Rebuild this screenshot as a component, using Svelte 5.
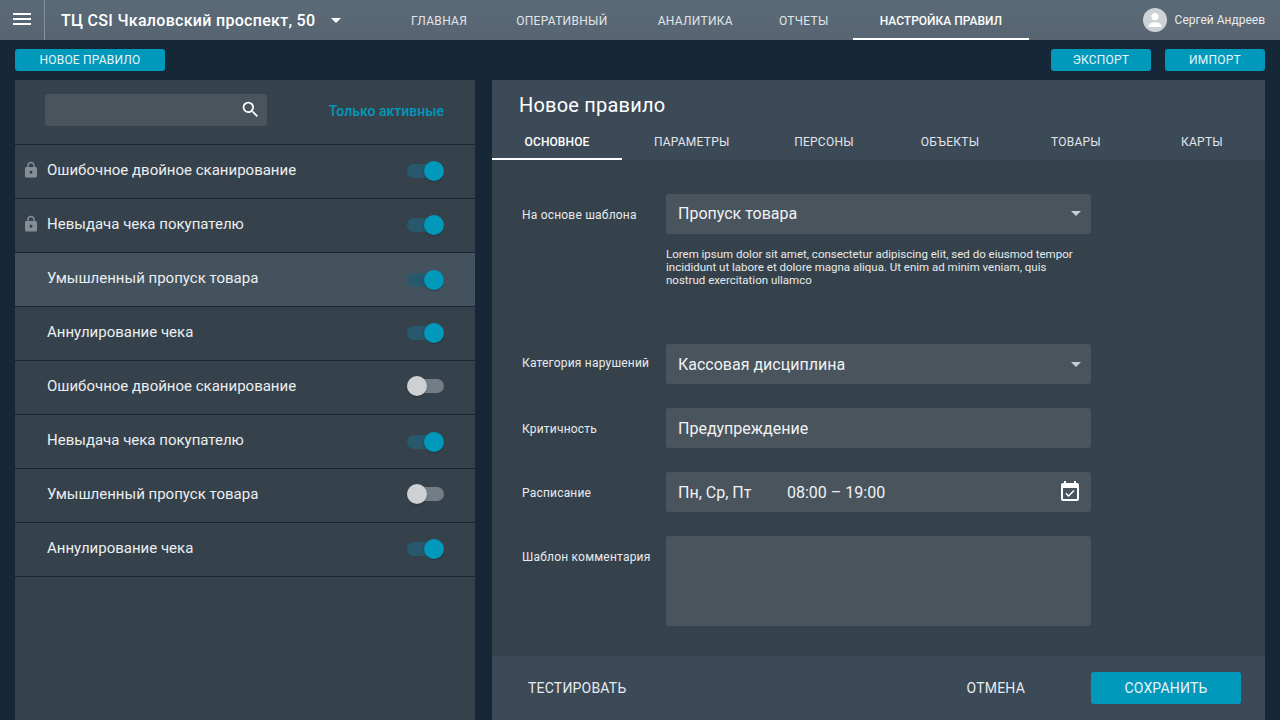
<script>
  const nav = ['ГЛАВНАЯ', 'ОПЕРАТИВНЫЙ', 'АНАЛИТИКА', 'ОТЧЕТЫ', 'НАСТРОЙКА ПРАВИЛ'];
  const tabs = ['ОСНОВНОЕ', 'ПАРАМЕТРЫ', 'ПЕРСОНЫ', 'ОБЪЕКТЫ', 'ТОВАРЫ', 'КАРТЫ'];
  const rules = [
    { name: 'Ошибочное двойное сканирование', locked: true, on: true },
    { name: 'Невыдача чека покупателю', locked: true, on: true },
    { name: 'Умышленный пропуск товара', on: true, selected: true, low: true },
    { name: 'Аннулирование чека', on: true },
    { name: 'Ошибочное двойное сканирование', on: false },
    { name: 'Невыдача чека покупателю', on: true, low: true },
    { name: 'Умышленный пропуск товара', on: false },
    { name: 'Аннулирование чека', on: true }
  ];
</script>

<div class="page">
  <header class="top">
    <button class="burger" aria-label="Меню"><span></span><span></span><span></span></button>
    <div class="place">
      <span class="place-name">ТЦ CSI Чкаловский проспект, 50</span>
      <i class="caret small"></i>
    </div>
    <nav class="nav">
      {#each nav as item, i}
        <span class="nav-item" class:active={i === nav.length - 1}>{item}</span>
      {/each}
    </nav>
    <div class="user">
      <svg class="avatar" viewBox="0 0 24 24" width="24" height="24">
        <circle cx="12" cy="12" r="12" fill="#ced2d6" />
        <circle cx="12" cy="8.6" r="3.6" fill="#fff" />
        <path d="M5.5 18.2c0-2.6 4-3.9 6.5-3.9s6.500 1.300 6.500 3.900v.8h-13z" fill="#fff" />
      </svg>
      <span>Сергей Андреев</span>
    </div>
  </header>

  <div class="toolbar">
    <button class="btn new">НОВОЕ ПРАВИЛО</button>
    <div class="toolbar-right">
      <button class="btn small-btn">ЭКСПОРТ</button>
      <button class="btn small-btn">ИМПОРТ</button>
    </div>
  </div>

  <main class="main">
    <aside class="left">
      <div class="filter">
        <div class="search">
          <svg viewBox="0 0 24 24" width="21" height="21"><path fill="#fff" d="M15.500 14h-.79l-.28-.27A6.470 6.470 0 0 0 16 9.500 6.500 6.500 0 1 0 9.500 16c1.610 0 3.090-.59 4.230-1.570l.27.28v.79l5 4.990L20.490 19l-4.990-5zm-6 0C7.010 14 5 11.990 5 9.500S7.010 5 9.500 5 14 7.010 14 9.500 11.990 14 9.500 14z"/></svg>
        </div>
        <span class="only">Только активные</span>
      </div>
      {#each rules as r}
        <div class="rule" class:selected={r.selected}>
          {#if r.locked}
            <svg class="lock" viewBox="0 0 24 24" width="18" height="18"><path fill="#858d95" d="M18 8h-1V6c0-2.760-2.240-5-5-5S7 3.240 7 6v2H6c-1.100 0-2 .9-2 2v10c0 1.100.9 2 2 2h12c1.100 0 2-.9 2-2V10c0-1.100-.9-2-2-2zm-6 9c-1.100 0-2-.9-2-2s.9-2 2-2 2 .9 2 2-.9 2-2 2zm3.100-9H8.900V6c0-1.710 1.390-3.100 3.100-3.100 1.710 0 3.100 1.390 3.100 3.100v2z"/></svg>
          {/if}
          <span class="rule-name">{r.name}</span>
          <span class="toggle" class:on={r.on} class:low={r.low}><span class="thumb"></span></span>
        </div>
      {/each}
    </aside>

    <section class="right">
      <div class="right-head">
        <h1>Новое правило</h1>
        <div class="tabs">
          {#each tabs as t, i}
            <span class="tab" class:active={i === 0}>{t}</span>
          {/each}
        </div>
      </div>

      <div class="form">
        <div class="row tmpl">
          <label>На основе шаблона</label>
          <div class="control">
            <div class="field"><span>Пропуск товара</span><i class="caret"></i></div>
            <p class="hint">Lorem ipsum dolor sit amet, consectetur adipiscing elit, sed do eiusmod tempor incididunt ut labore et dolore magna aliqua. Ut enim ad minim veniam, quis nostrud exercitation ullamco</p>
          </div>
        </div>
        <div class="row">
          <label class="up">Категория нарушений</label>
          <div class="field"><span>Кассовая дисциплина</span><i class="caret"></i></div>
        </div>
        <div class="row">
          <label class="low">Критичность</label>
          <div class="field"><span>Предупреждение</span></div>
        </div>
        <div class="row">
          <label class="low">Расписание</label>
          <div class="field">
            <span class="days">Пн, Ср, Пт</span>
            <span class="time">08:00 – 19:00</span>
            <svg class="cal" viewBox="0 0 24 24" width="24" height="24"><path fill="#fff" d="M16.530 11.060L15.470 10l-4.880 4.880-2.120-2.120-1.060 1.060L10.590 17l5.940-5.940zM19 3h-1V1h-2v2H8V1H6v2H5c-1.110 0-1.990.9-1.990 2L3 19c0 1.100.89 2 2 2h14c1.100 0 2-.9 2-2V5c0-1.100-.9-2-2-2zm0 16H5V8h14v11z"/></svg>
          </div>
        </div>
        <div class="row top-row">
          <label>Шаблон комментария</label>
          <div class="field area"></div>
        </div>
      </div>

      <footer class="foot">
        <button class="ghost test">ТЕСТИРОВАТЬ</button>
        <button class="ghost cancel">ОТМЕНА</button>
        <button class="btn save">СОХРАНИТЬ</button>
      </footer>
    </section>
  </main>
</div>

<style>
  :global(body) {
    margin: 0;
    background: #162737;
  }
  .page {
    width: 1280px;
    height: 720px;
    overflow: hidden;
    display: flex;
    flex-direction: column;
    background: #162737;
    font-family: Roboto, "Liberation Sans", sans-serif;
    color: #fff;
  }
  button {
    font-family: inherit;
    border: 0;
    cursor: pointer;
  }

  .top {
    height: 40px;
    flex: none;
    display: flex;
    align-items: stretch;
    background: linear-gradient(#5b6a78, #576572);
  }
  .burger {
    width: 45px;
    flex: none;
    padding: 0 13px 2px 13px;
    background: none;
    border-right: 1px solid #8692a0;
    display: flex;
    flex-direction: column;
    justify-content: center;
    gap: 3px;
    box-sizing: border-box;
  }
  .burger span {
    display: block;
    height: 2px;
    background: #fff;
  }
  .place {
    width: 341.5px;
    flex: none;
    box-sizing: border-box;
    padding-left: 16px;
    display: flex;
    align-items: center;
    gap: 16px;
  }
  .place-name {
    font-size: 16px;
    font-weight: 500;
    letter-spacing: 0.3px;
  }
  .caret {
    display: block;
    width: 0;
    height: 0;
    border-left: 5px solid transparent;
    border-right: 5px solid transparent;
    border-top: 5px solid #c8cdd2;
    margin-left: auto;
  }
  .caret.small {
    border-top-color: #fff;
    margin-left: 0;
  }
  .nav {
    display: flex;
    align-items: stretch;
    font-size: 12px;
    letter-spacing: 0.3px;
  }
  .nav-item {
    display: flex;
    align-items: center;
    padding: 1px 24.5px 0;
    color: #e2e5e8;
  }
  .nav-item:nth-child(3) {
    margin-left: 1px;
  }
  .nav-item:nth-child(4) {
    margin-left: -3px;
  }
  .nav-item.active {
    padding: 1px 27px 0;
    margin-left: -0.5px;
    font-weight: 500;
    letter-spacing: 0;
    color: #fff;
    box-shadow: inset 0 -2px 0 #fff;
  }
  .user {
    margin-left: auto;
    padding-right: 15px;
    display: flex;
    align-items: center;
    gap: 8px;
    font-size: 12px;
    color: #e8eaec;
  }

  .toolbar {
    height: 40px;
    flex: none;
    display: flex;
    align-items: center;
    justify-content: space-between;
    padding: 0 15px;
    box-sizing: border-box;
  }
  .toolbar-right {
    display: flex;
    gap: 14px;
  }
  .btn {
    background: #0099bc;
    color: #e8f4f8;
    border-radius: 3px;
    font-size: 12px;
    letter-spacing: 0.2px;
    height: 22px;
    padding: 0;
  }
  .btn.new {
    width: 150px;
  }
  .btn.small-btn {
    width: 100px;
  }

  .main {
    flex: 1;
    min-height: 0;
    display: flex;
    padding: 0 15px;
    gap: 17px;
  }
  .left {
    width: 460px;
    flex: none;
    background: #36424b;
  }
  .filter {
    height: 65px;
    display: flex;
    align-items: center;
    padding: 0 31px 5px 30px;
    justify-content: space-between;
    box-sizing: border-box;
    border-bottom: 1px solid #162737;
  }
  .search {
    width: 222px;
    height: 32px;
    background: #49545d;
    border-radius: 3px;
    display: flex;
    align-items: center;
    justify-content: flex-end;
    padding-right: 6px;
    box-sizing: border-box;
  }
  .only {
    font-size: 14px;
    font-weight: 500;
    letter-spacing: 0.02px;
    color: #0099bc;
    padding-top: 2px;
  }
  .rule {
    height: 54px;
    box-sizing: border-box;
    border-bottom: 1px solid #162737;
    position: relative;
    display: flex;
    align-items: center;
    padding: 0 31px 0 32px;
    justify-content: space-between;
  }
  .rule.selected {
    background: #43525d;
  }
  .lock {
    position: absolute;
    left: 7px;
    top: 16px;
  }
  .rule-name {
    font-size: 15px;
    color: #eceef0;
    padding-bottom: 3px;
  }
  .toggle {
    position: relative;
    width: 37px;
    height: 14px;
    border-radius: 7px;
    background: #747d86;
    margin-top: -3px;
  }
  .toggle.on {
    background: #28586c;
    margin-top: -1px;
  }
  .toggle.on.low {
    margin-top: 0;
  }
  .thumb {
    position: absolute;
    left: 0;
    top: -3px;
    width: 20px;
    height: 20px;
    border-radius: 50%;
    background: #ced1d4;
    box-shadow: 0 1px 2px rgba(0, 0, 0, 0.25);
  }
  .toggle.on .thumb {
    left: 17px;
    background: #0099bc;
  }

  .right {
    flex: 1;
    min-width: 0;
    display: flex;
    flex-direction: column;
    background: #36424b;
  }
  .right-head {
    height: 80px;
    flex: none;
    background: #3c4a58;
    display: flex;
    flex-direction: column;
    justify-content: flex-end;
  }
  h1 {
    margin: 0 0 0 27px;
    font-size: 20px;
    font-weight: 400;
    line-height: 24px;
    letter-spacing: 0.2px;
    color: #fff;
    padding-bottom: 6px;
  }
  .tabs {
    display: flex;
    height: 37px;
  }
  .tab {
    min-width: 126px;
    padding: 0 32px;
    box-sizing: border-box;
    display: flex;
    align-items: center;
    justify-content: center;
    font-size: 12px;
    letter-spacing: 0.25px;
    color: #e2e5e8;
  }
  .tab:nth-child(3) {
    margin-left: 0.5px;
  }
  .tab.active {
    min-width: 130px;
    padding: 0;
    margin-right: 1px;
    font-weight: 500;
    letter-spacing: 0.1px;
    color: #fff;
    box-shadow: inset 0 -2px 0 #fff;
  }

  .form {
    flex: 1;
    min-height: 0;
    padding: 34px 0 0 30px;
    display: flex;
    flex-direction: column;
    gap: 24px;
  }
  .row {
    display: flex;
    align-items: center;
  }
  .row.tmpl {
    align-items: flex-start;
    height: 126px;
  }
  .row.tmpl label {
    line-height: 42px;
  }
  .row.tmpl .field {
    padding-bottom: 1px;
  }
  .row.top-row {
    align-items: flex-start;
  }
  .row.top-row label {
    line-height: 42px;
  }
  label {
    width: 144px;
    flex: none;
    font-size: 12px;
    letter-spacing: 0.2px;
    color: #e8eaec;
  }
  label.low {
    padding-top: 2px;
  }
  label.up {
    padding-bottom: 2px;
  }
  .control {
    width: 425px;
  }
  .field {
    width: 425px;
    height: 40px;
    box-sizing: border-box;
    padding: 0 10px 0 12px;
    background: #49545d;
    border-radius: 3px;
    display: flex;
    align-items: center;
    font-size: 16px;
    color: #f0f2f3;
  }
  .field.area {
    height: 90px;
  }
  .days {
    width: 109px;
  }
  .cal {
    margin-left: auto;
    margin-right: -1px;
  }
  .hint {
    margin: 14px 0 0;
    max-width: 415px;
    font-size: 11.5px;
    line-height: 13px;
    color: #e8eaec;
  }
  .foot {
    height: 64px;
    flex: none;
    background: #3c4a58;
    display: flex;
    align-items: center;
    padding: 0 24px 0 36px;
  }
  .ghost {
    background: none;
    color: #e8eaec;
    font-size: 14px;
    letter-spacing: 0.2px;
    padding: 0;
  }
  .cancel {
    margin-left: auto;
    margin-right: 66px;
  }
  .btn.save {
    width: 150px;
    height: 32px;
    font-size: 14px;
  }
</style>
